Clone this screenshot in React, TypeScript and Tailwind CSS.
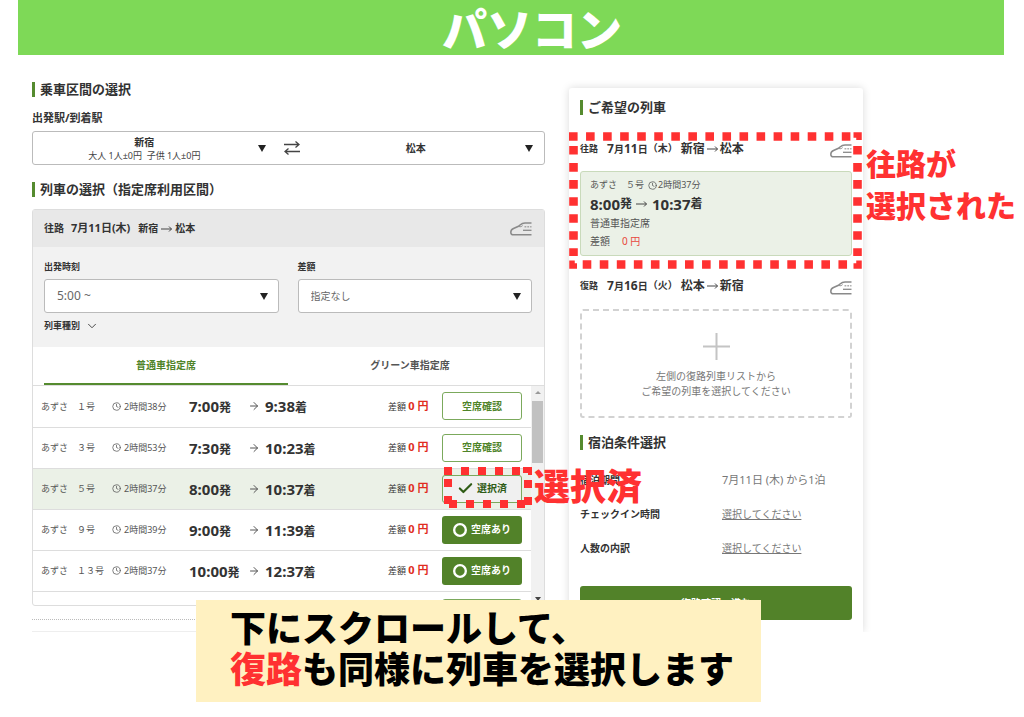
import React, { useState } from 'react';
import { ArrowRight, Check, ChevronDown, Circle, Clock } from 'lucide-react';

interface Train {
  name: string;
  duration: string;
  departure: string;
  arrival: string;
  status: 'check' | 'selected' | 'open';
}

const trains: Train[] = [
  { name: 'あずさ　１号', duration: '2時間38分', departure: '7:00', arrival: '9:38', status: 'check' },
  { name: 'あずさ　３号', duration: '2時間53分', departure: '7:30', arrival: '10:23', status: 'check' },
  { name: 'あずさ　５号', duration: '2時間37分', departure: '8:00', arrival: '10:37', status: 'selected' },
  { name: 'あずさ　９号', duration: '2時間39分', departure: '9:00', arrival: '11:39', status: 'open' },
  { name: 'あずさ　１３号', duration: '2時間37分', departure: '10:00', arrival: '12:37', status: 'open' },
];

const SectionTitle: React.FC<{ children: React.ReactNode }> = ({ children }) => (
  <h2 className="flex items-center gap-[5px] text-[13px] leading-5 font-bold">
    <span className="w-[3px] h-[15px] bg-[#558b2f]"></span>
    {children}
  </h2>
);

const TrainIcon = () => (
  <svg width="22" height="14" viewBox="0 0 22 14" fill="none" stroke="#8a8a8a" strokeWidth="1.5">
    <path d="M21.5 1H15C13 1 11.5 1.7 10 3L8.5 4.3L3.5 6.5C1.6 7.4 .8 8.8 .8 10.2C.8 11.8 1.8 12.8 3.4 12.8H21.5" />
    <path d="M9 4.4C10 5 11.4 4.8 12.6 3.6" strokeWidth="1" />
    <path d="M14.5 4.7H21.5" strokeWidth="1.6" strokeDasharray="1.8 1" strokeOpacity=".7" />
    <path d="M13 8.3H21.5" strokeWidth="1.3" />
  </svg>
);

const LongArrow: React.FC<{ className: string }> = ({ className }) => (
  <svg className={className} width="11" height="8" viewBox="0 0 11 8" fill="none" stroke="#444" strokeWidth="1">
    <path d="M0 4H10.5M8 1.5L10.5 4L8 6.5" />
  </svg>
);

const Triangle: React.FC<{ className: string }> = ({ className }) => (
  <svg className={`absolute top-1/2 -mt-[3px] pointer-events-none ${className}`} width="8" height="7" viewBox="0 0 8 7" fill="#222">
    <path d="M0 0H8L4 7Z" />
  </svg>
);

const FilterSelect: React.FC<{ id: string; label: string; option: string; className: string }> = ({ id, label, option, className }) => (
  <div>
    <label htmlFor={id} className="block text-[9px] leading-4 font-bold">{label}</label>
    <div className="relative mt-1">
      <select id={id} className={`w-full h-[34px] px-3 appearance-none rounded-[3px] border border-[#bbb] bg-white text-[#666] ${className}`}>
        <option>{option}</option>
      </select>
      <Triangle className="right-[11px]" />
    </div>
  </div>
);

const StatusButton: React.FC<{ status: Train['status'] }> = ({ status }) => {
  if (status === 'check') {
    return (
      <button className="block w-20 h-7 rounded-[3px] border border-[#7ba95c] bg-white text-[#4f8429] text-[10px] font-bold">
        空席確認
      </button>
    );
  }
  if (status === 'selected') {
    return (
      <div className="relative w-20 h-7">
        <button className="w-full h-full flex items-center justify-center gap-[3px] rounded-[3px] border border-[#7ba95c] bg-[#f0f0f0] text-[#2f5c16] text-[10px] font-bold">
          <Check size={17} strokeWidth={3} />
          選択済
        </button>
        <svg className="absolute z-10 -top-2 left-[2px] pointer-events-none" width="88" height="41" viewBox="0 0 88 41" fill="none" stroke="#ff3131" strokeWidth="8">
          <path d="M0 4H78" strokeDasharray="8 9" />
          <path d="M79 3H87V8" strokeWidth="6" />
          <path d="M4 12V37" strokeDasharray="8 9" />
          <path d="M84 13V39" strokeDasharray="8 9" />
          <path d="M5 37H82" strokeDasharray="8 9" />
        </svg>
        <strong className="absolute z-10 left-[92px] -top-[10px] text-[36px] leading-[44px] font-black text-[#ff3131] whitespace-nowrap">選択済</strong>
      </div>
    );
  }
  return (
    <button className="w-20 h-7 flex items-center justify-center gap-1 rounded-[3px] bg-[#528229] text-white text-[10px] font-bold">
      <Circle size={14} strokeWidth={4} />
      空席あり
    </button>
  );
};

const RouteRow: React.FC<{ label: string; day: string; week: string; from: string; to: string }> = ({ label, day, week, from, to }) => (
  <div className="flex items-center h-5 font-bold text-xs whitespace-nowrap">
    <span className="text-[9px] mr-[9px]">{label}</span>
    <span>7<span className="text-[10px]">月</span>{day}<span className="text-[10px]">日</span></span>
    <span className="text-[10px] mr-[3px]">（{week}）</span>
    <span>{from}</span>
    <LongArrow className="mx-[2px]" />
    <span>{to}</span>
    <span className="ml-auto pt-1"><TrainIcon /></span>
  </div>
);

const TrainList = () => (
  <div className="flex">
    <div className="flex-1">
      <table className="w-full table-fixed border-collapse text-[9px] whitespace-nowrap">
        <colgroup>
          <col className="w-[79px]" />
          <col className="w-[77px]" />
          <col className="w-[60px]" />
          <col className="w-4" />
          <col />
          <col className="w-[54px]" />
          <col className="w-[89px]" />
        </colgroup>
        <tbody>
          {trains.map((train) => (
            <tr
              key={train.name}
              className={`h-[41px] border-b border-[#ddd] ${train.status === 'selected' ? 'bg-[#ebf1e7]' : ''}`}
            >
              <td className="pl-2 text-[#555]">{train.name}</td>
              <td className="text-[#555]">
                <span className="flex items-center gap-[3px]"><Clock size={9} />{train.duration}</span>
              </td>
              <td className="text-[15px] leading-5 font-bold">{train.departure}<span className="text-xs">発</span></td>
              <td><ArrowRight size={12} strokeWidth={2} className="-ml-px text-[#555]" /></td>
              <td className="text-[15px] leading-5 font-bold">{train.arrival}<span className="text-xs">着</span></td>
              <td>差額 <b className="text-[11px] text-[#e02b20]">0 円</b></td>
              <td><StatusButton status={train.status} /></td>
            </tr>
          ))}
        </tbody>
      </table>
      <div className="h-[13px] pt-[7px] flex justify-end pr-[9px] overflow-hidden">
        <div className="w-20 h-7 shrink-0 rounded-[3px] border border-[#7ba95c]"></div>
      </div>
    </div>
    {/* scroll bar */}
    <div className="w-[13px] bg-[#f1f1f1] flex flex-col items-center justify-between py-1">
      <svg width="6" height="5" viewBox="0 0 6 5" fill="#999"><path d="M0 4H6L3 1Z" /></svg>
      <div className="w-[11px] h-[62px] mt-[6px] mb-auto bg-[#c1c1c1]"></div>
      <svg width="6" height="5" viewBox="0 0 6 5" fill="#444"><path d="M0 1H6L3 5Z" /></svg>
    </div>
  </div>
);

const SearchColumn = () => {
  const [activeTab, setActiveTab] = useState('normal');

  const tabs = [
    { id: 'normal', label: '普通車指定席' },
    { id: 'green', label: 'グリーン車指定席' },
  ];

  return (
    <section className="pt-6">
      <SectionTitle>乗車区間の選択</SectionTitle>
      <label htmlFor="from" className="block mt-[11px] text-[11px] leading-4 font-bold">出発駅/到着駅</label>
      <div className="mt-[5px] h-[34px] flex items-stretch rounded-[3px] border border-[#bbb]">
        <div className="relative flex-[226] flex flex-col justify-center text-center pr-[6px]">
          <select id="from" className="w-full h-[14px] appearance-none text-center text-[10px] leading-[14px] font-bold">
            <option>新宿</option>
          </select>
          <p className="text-[9px] leading-[13px] text-[#444] whitespace-pre">大人 1人±0円  子供 1人±0円</p>
          <Triangle className="right-[-4px]" />
        </div>
        <button aria-label="入れ替え" className="w-12 flex items-center justify-end pr-[10px]">
          <svg width="16" height="14" viewBox="0 0 16 14" fill="none" stroke="#444" strokeWidth="1.3">
            <path d="M0 3.5H15M11.5 .5L15 3.5L11.5 6.5M16 10.5H1M4.5 7.5L1 10.5L4.5 13.5" />
          </svg>
        </button>
        <div className="relative flex-[238] flex items-center">
          <select aria-label="到着駅" className="w-full h-full pr-[22px] appearance-none text-center text-[10px] font-bold">
            <option>松本</option>
          </select>
          <Triangle className="right-[11px]" />
        </div>
      </div>

      <div className="mt-[14px]">
        <SectionTitle>列車の選択（指定席利用区間）</SectionTitle>
      </div>
      <div className="mt-[10px] rounded-[3px] border border-[#ddd]">
        <div className="h-[37px] pl-[11px] pr-3 flex items-center bg-[#e8e8e8] text-[10px] font-bold">
          <span className="mr-[7px]">往路</span>
          <span className="mr-2 text-[11px]">7月11日(木)</span>
          <span>新宿</span>
          <LongArrow className="mx-[3px]" />
          <span>松本</span>
          <span className="ml-auto"><TrainIcon /></span>
        </div>

        <div className="pl-[11px] pr-3 pt-3 pb-[13px] bg-[#f2f2f2]">
          <div className="grid grid-cols-2 gap-[19px]">
            <FilterSelect id="time" label="出発時刻" option="5:00 ~" className="text-xs" />
            <FilterSelect id="price" label="差額" option="指定なし" className="text-[10px]" />
          </div>
          <button className="mt-[5px] h-4 flex items-center gap-[5px] text-[9px] font-bold">
            列車種別
            <ChevronDown size={14} strokeWidth={1.5} />
          </button>
        </div>

        <div className="pl-[11px] pr-3 grid grid-cols-2 border-b border-[#ddd]">
          {tabs.map((tab) => (
            <button
              key={tab.id}
              onClick={() => setActiveTab(tab.id)}
              className={`h-[38px] text-[10px] font-bold border-b-2 ${
                activeTab === tab.id ? 'border-[#558b2f] text-[#4f8429]' : 'border-transparent text-[#555]'
              }`}
            >
              {tab.label}
            </button>
          ))}
        </div>
        <TrainList />
      </div>
      <div className="mt-[13px] border-t border-dotted border-[#bbb]"></div>
      <div className="mt-[11px] border-t border-[#eee]"></div>
    </section>
  );
};

const SummaryCard = () => (
  <aside className="mt-[33px] pt-[9px] px-[11px] bg-white rounded-t-[3px] shadow-[0_0_8px_rgba(0,0,0,0.15)]">
    <SectionTitle>ご希望の列車</SectionTitle>

    <div className="relative mt-[22px]">
      <RouteRow label="往路" day="11" week="木" from="新宿" to="松本" />
      <div className="mt-3 pt-1 pb-[5px] px-[9px] rounded-[3px] border border-[#c9dabb] bg-[#ebf1e7] text-[#555]">
        <p className="flex items-center text-[9px] leading-[18px]">
          <span className="mr-1">あずさ　５号</span>
          <Clock size={9} className="mr-px" />2時間37分
        </p>
        <p className="flex items-center text-[15px] leading-5 font-bold text-[#333]">
          8:00<span className="text-xs">発</span>
          <LongArrow className="ml-1 mr-[5px]" />
          10:37<span className="text-xs">着</span>
        </p>
        <p className="text-[10px] leading-[18px]">普通車指定席</p>
        <p className="text-[10px] leading-[18px]">差額<span className="ml-3 text-[#e8463c]">0 円</span></p>
      </div>

      {/* highlight around the outbound train */}
      <svg className="absolute z-10 -left-[11px] -top-[7px] pointer-events-none" width="293" height="137" viewBox="0 0 293 137" fill="none" stroke="#ff3131" strokeWidth="8.6">
        <path d="M0 4.5H282" strokeDasharray="8.6 8.45" />
        <path d="M284.5 3H290V8" strokeWidth="5.5" />
        <path d="M288.5 14V124" strokeDasharray="8.6 8.45" />
        <path d="M4.5 14V124" strokeDasharray="8.6 8.45" />
        <path d="M13.7 132.5H280" strokeDasharray="8.6 8.45" />
        <path d="M3 128.5V134H8M284.5 134H290V128.5" strokeWidth="5.5" />
      </svg>
      <strong className="absolute z-10 left-[286px] top-1 text-[30px] leading-[42px] font-black text-[#ff3131] whitespace-nowrap">
        往路が<br />選択された
      </strong>
    </div>

    <div className="mt-5">
      <RouteRow label="復路" day="16" week="火" from="松本" to="新宿" />
    </div>
    <div className="mt-[13px] h-[109px] pt-[22px] flex flex-col items-center rounded-[3px] border-2 border-dashed border-[#d2d2d2] text-[10px] leading-[15px] text-center text-[#777]">
      <svg width="27" height="27" viewBox="0 0 27 27" stroke="#c4c4c4" strokeWidth="2">
        <path d="M0 13.5H27M13.5 0V27" />
      </svg>
      <p className="mt-[9px]">左側の復路列車リストから<br />ご希望の列車を選択してください</p>
    </div>

    <div className="mt-[14px]">
      <SectionTitle>宿泊条件選択</SectionTitle>
    </div>
    <dl className="mt-[19px] grid grid-cols-[142px_1fr] gap-y-4 text-[10px] leading-[18px] text-[#777] whitespace-nowrap">
      <dt className="font-bold text-[#333]">宿泊期間</dt>
      <dd className="text-[11px]">7月11日 (木) から1泊</dd>
      <dt className="font-bold text-[#333]">チェックイン時間</dt>
      <dd><a href="#checkin" className="underline">選択してください</a></dd>
      <dt className="font-bold text-[#333]">人数の内訳</dt>
      <dd><a href="#guests" className="underline">選択してください</a></dd>
    </dl>
    <button className="mt-[29px] mb-[10px] w-full h-[34px] rounded-[3px] bg-[#528229] text-white text-[10px] font-bold">
      復路確認へ進む
    </button>
  </aside>
);

const App = () => (
  <div className="bg-white text-[#333] font-['Noto_Sans','Noto_Sans_CJK_JP',sans-serif]">
    <header className="ml-[18px] mr-5 h-[55px] pt-1 pl-[42px] flex items-center justify-center bg-[#7ed957]">
      <h1 className="text-[45px] leading-[55px] font-black text-white">パソコン</h1>
    </header>
    <main className="pl-8 pr-[161px] grid grid-cols-[513fr_294fr] gap-x-6 overflow-hidden">
      <SearchColumn />
      <SummaryCard />
    </main>
    <div className="relative z-20 -mt-8 mb-4 ml-[196px] w-[565px] pt-2 pb-3 pl-[34px] bg-[#fff1c1] text-[36px] leading-[41px] font-black text-black whitespace-nowrap">
      <p>下にスクロールして、</p>
      <p><span className="text-[#ff3131]">復路</span>も同様に列車を選択します</p>
    </div>
  </div>
);

export default App;
